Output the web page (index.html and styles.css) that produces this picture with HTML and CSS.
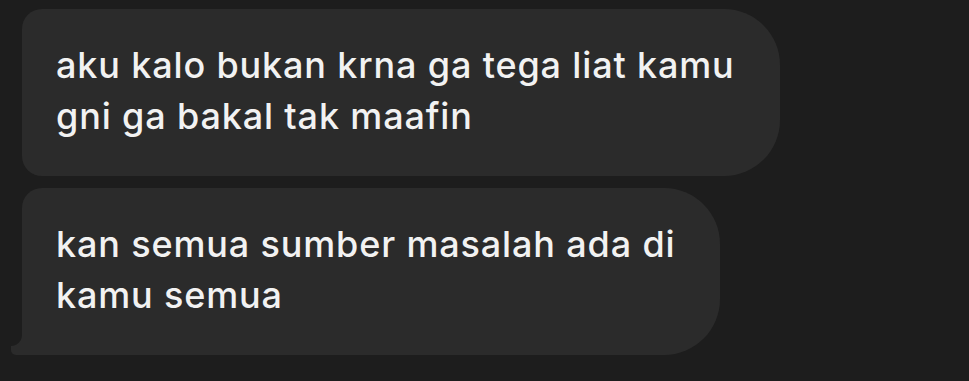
FILE: index.html
```html
<!DOCTYPE html>
<html>
<head>
<meta charset="utf-8">
<link rel="stylesheet" href="styles.css">
</head>
<body>
<div class="chat">
  <div class="bubble">aku kalo bukan krna ga tega liat kamu<br>gni ga bakal tak maafin</div>
  <div class="bubble tail">kan semua sumber masalah ada di<br>kamu semua</div>
</div>
</body>
</html>
```
FILE: styles.css
```css
html, body {
  margin: 0;
  padding: 0;
  background: #1d1d1d;
  width: 969px;
  height: 381px;
  overflow: hidden;
}
.chat {
  display: flex;
  flex-direction: column;
  align-items: flex-start;
  gap: 12px;
  padding: 9px 0 0 22px;
}
.bubble {
  position: relative;
  box-sizing: border-box;
  width: max-content;
  background: #2b2b2b;
  color: #f2f2f2;
  font-family: Inter, "Noto Sans", sans-serif;
  font-weight: 500;
  font-size: 36px;
  letter-spacing: 0.85px;
  line-height: 51px;
  padding: 31px 45px 34px 34px;
  border-radius: 20px 56px 56px 20px;
}
.tail {
  border-bottom-left-radius: 0;
}
.tail::before {
  content: "";
  position: absolute;
  left: -11px;
  bottom: 0;
  width: 14px;
  height: 9px;
  background: #2b2b2b;
  border-bottom-left-radius: 5px;
}
.tail::after {
  content: "";
  position: absolute;
  left: -11px;
  bottom: 9px;
  width: 11px;
  height: 11px;
  background: radial-gradient(circle at 0 0, transparent 10.5px, #2b2b2b 11.5px);
}
```
